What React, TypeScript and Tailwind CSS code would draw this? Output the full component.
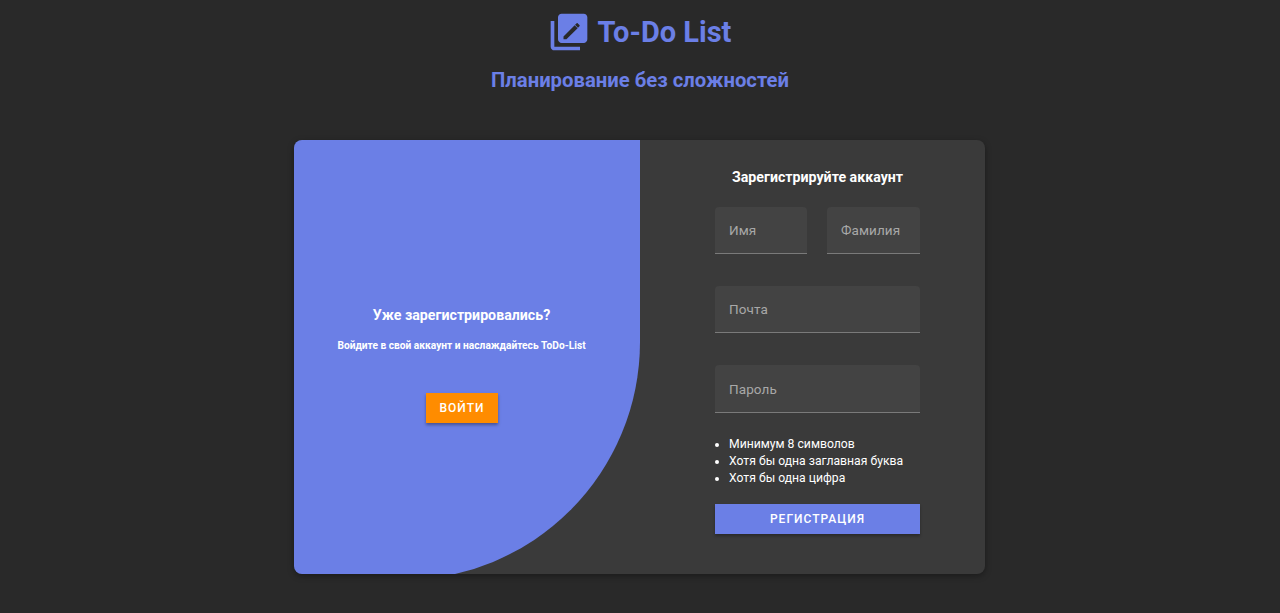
const FONT = "font-['Roboto',sans-serif]";

function TextField({ label, className }: { label: string; className: string }) {
  return (
    <div className={`flex items-center bg-[#434343] rounded-t border-b border-[#7a7a7a] pl-[14px] pt-[1px] text-[13.5px] tracking-[0.1px] text-[#a8a8a8] ${className}`}>
      {label}
    </div>
  );
}

export default function App() {
  return (
    <div className={`${FONT} min-h-[613px] bg-[#292929] flex flex-col overflow-hidden`}>
      <div className="self-center flex items-center mt-[10px] ml-[-2px] h-[44px] text-[#6b7fe6]">
        <svg viewBox="0 0 24 24" width="44" height="44" fill="currentColor" className="mr-[7px]">
          <path d="M4 6H2v14c0 1.100.9 2 2 2h14v-2H4V6z" />
          <path d="M20 2H8c-1.100 0-2 .9-2 2v12c0 1.100.9 2 2 2h12c1.100 0 2-.9 2-2V4c0-1.100-.9-2-2-2zm-9.400 14H9v-1.600l6.100-6.100 1.600 1.600-6.100 6.100zm7.100-7.100-.8.8-1.600-1.600.8-.8c.2-.2.5-.2.7 0l.9.900c.2.200.2.500 0 .7z" />
        </svg>
        <h1 className="text-[29px] font-bold leading-none">To-Do List</h1>
      </div>
      <h2 className="self-center mt-[14px] text-[20.3px] leading-[24px] font-bold text-[#6b7fe6]">Планирование без сложностей</h2>

      <div className="ml-[294px] mt-[48px] w-[691px] h-[434px] flex items-start bg-[#3a3a3a] rounded-lg overflow-hidden shadow-[0_2px_6px_rgba(0,0,0,0.35)]">
        <div className="w-[346px] h-[440px] shrink-0 bg-[#6b7fe6] rounded-br-[238px] text-white">
          <div className="w-[335px] flex flex-col items-center pt-[166px]">
            <h3 className="text-[14.2px] leading-[18px] font-bold">Уже зарегистрировались?</h3>
            <p className="mt-[15px] text-[10.2px] leading-[14px] font-bold">Войдите в свой аккаунт и наслаждайтесь ToDo-List</p>
            <button className="mt-[40px] ml-[1px] w-[72px] h-[30px] bg-[#ff8c00] text-[12px] font-medium tracking-[1px] text-white shadow-[0_2px_3px_rgba(0,0,0,0.35)]">ВОЙТИ</button>
          </div>
        </div>

        <div className="flex-1 pl-[75px] pt-[29px] text-white">
          <div className="w-[205px] flex flex-col">
            <h3 className="text-[14.2px] leading-[16px] font-bold text-center whitespace-nowrap">Зарегистрируйте аккаунт</h3>
            <div className="mt-[22px] flex justify-between">
              <TextField label="Имя" className="w-[92px] h-[47px]" />
              <TextField label="Фамилия" className="w-[93px] h-[47px]" />
            </div>
            <TextField label="Почта" className="mt-[32px] h-[47px]" />
            <TextField label="Пароль" className="mt-[32px] h-[48px]" />
            <ul className="mt-[23px] list-disc pl-[14px] text-[12.2px] leading-[17px]">
              <li>Минимум 8 символов</li>
              <li>Хотя бы одна заглавная буква</li>
              <li>Хотя бы одна цифра</li>
            </ul>
            <button className="mt-[17px] h-[30px] bg-[#6b7fe6] text-[12px] font-medium tracking-[1px] text-white shadow-[0_2px_3px_rgba(0,0,0,0.3)]">РЕГИСТРАЦИЯ</button>
          </div>
        </div>
      </div>
    </div>
  );
}
